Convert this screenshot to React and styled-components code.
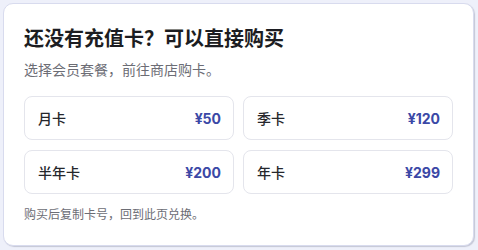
import styled, { createGlobalStyle } from "styled-components";

const GlobalStyle = createGlobalStyle`
  html, body {
    margin: 0;
    padding: 0;
    background: #eef0fa;
  }
  body {
    font-family: "Noto Sans CJK SC", "Noto Sans", sans-serif;
  }
`;

const Page = styled.div`
  padding: 3px 4px 4px 3px;
`;

const Card = styled.div`
  box-sizing: border-box;
  width: 471px;
  height: 243px;
  background: #ffffff;
  border: 1px solid #d8dbee;
  border-radius: 10px;
  box-shadow: 1px 1px 1px rgba(120, 124, 150, 0.35);
  padding: 19px 20px 0 20px;
  display: flex;
  flex-direction: column;
`;

const Title = styled.h2`
  margin: 0;
  font-size: 20px;
  line-height: 30px;
  font-weight: 700;
  color: #1c1d22;
`;

const Subtitle = styled.p`
  margin: 6px 0 0;
  font-size: 14px;
  line-height: 20px;
  color: #6c6d75;
`;

const Grid = styled.div`
  margin-top: 17px;
  display: grid;
  grid-template-columns: 1fr 1fr;
  column-gap: 9px;
  row-gap: 10px;
`;

const Option = styled.div`
  box-sizing: border-box;
  height: 44px;
  border: 1px solid #e4e5ec;
  border-radius: 8px;
  padding: 0 12px 0 13px;
  display: flex;
  align-items: center;
  justify-content: space-between;
`;

const Name = styled.span`
  font-size: 14px;
  font-weight: 500;
  color: #26272c;
`;

const Price = styled.span`
  font-family: "Inter", "Noto Sans", sans-serif;
  font-size: 14px;
  font-weight: 700;
  color: #3b48a6;
`;

const Note = styled.p`
  margin: 11px 0 0;
  font-size: 12px;
  line-height: 18px;
  color: #6c6d75;
`;

const plans = [
  { name: "月卡", price: "¥50" },
  { name: "季卡", price: "¥120" },
  { name: "半年卡", price: "¥200" },
  { name: "年卡", price: "¥299" },
];

export default function App() {
  return (
    <>
      <GlobalStyle />
      <Page>
        <Card>
          <Title>还没有充值卡？可以直接购买</Title>
          <Subtitle>选择会员套餐，前往商店购卡。</Subtitle>
          <Grid>
            {plans.map((p) => (
              <Option key={p.name}>
                <Name>{p.name}</Name>
                <Price>{p.price}</Price>
              </Option>
            ))}
          </Grid>
          <Note>购买后复制卡号，回到此页兑换。</Note>
        </Card>
      </Page>
    </>
  );
}
